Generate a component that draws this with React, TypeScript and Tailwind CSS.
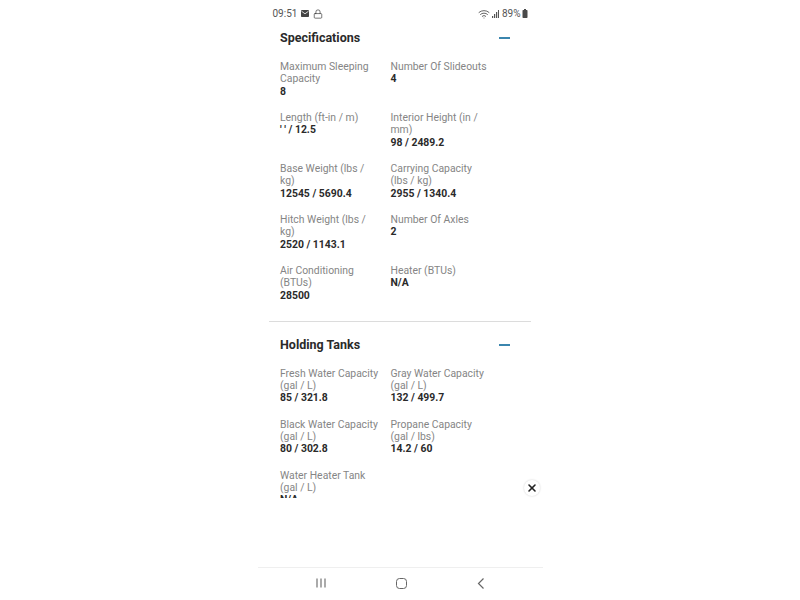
import { Lock, Wifi, X } from "lucide-react";

type Spec = { label: string; value: string };

const specifications: Spec[] = [
  { label: "Maximum Sleeping Capacity", value: "8" },
  { label: "Number Of Slideouts", value: "4" },
  { label: "Length (ft-in / m)", value: "' ' / 12.5" },
  { label: "Interior Height (in / mm)", value: "98 / 2489.2" },
  { label: "Base Weight (lbs / kg)", value: "12545 / 5690.4" },
  { label: "Carrying Capacity (lbs / kg)", value: "2955 / 1340.4" },
  { label: "Hitch Weight (lbs / kg)", value: "2520 / 1143.1" },
  { label: "Number Of Axles", value: "2" },
  { label: "Air Conditioning (BTUs)", value: "28500" },
  { label: "Heater (BTUs)", value: "N/A" },
];

const holdingTanks: Spec[] = [
  { label: "Fresh Water Capacity (gal / L)", value: "85 / 321.8" },
  { label: "Gray Water Capacity (gal / L)", value: "132 / 499.7" },
  { label: "Black Water Capacity (gal / L)", value: "80 / 302.8" },
  { label: "Propane Capacity (gal / lbs)", value: "14.2 / 60" },
  { label: "Water Heater Tank (gal / L)", value: "N/A" },
];

function SpecGrid({ items }: { items: Spec[] }) {
  return (
    <div className="grid grid-cols-[110.5px_110.5px] gap-y-[14.25px] pl-[11.5px]">
      {items.map((item) => (
        <div key={item.label} className="pr-[10px] text-[10.4px] leading-[12.25px]">
          <div className="text-[#858585]">{item.label}</div>
          <div className="font-bold text-[#2a2a2a]">{item.value}</div>
        </div>
      ))}
    </div>
  );
}

function SectionHeader({ title }: { title: string }) {
  return (
    <div className="flex h-[20px] items-center justify-between pl-[11.5px] pr-[21px]">
      <h2 className="text-[12.5px] font-bold text-[#2a2a2a]">{title}</h2>
      <div className="h-[2px] w-[11px] bg-[#3b86ae]" />
    </div>
  );
}

export default function App() {
  return (
    <div className="h-[600px] w-[800px] bg-white font-['Roboto',sans-serif]">
      <div className="relative mx-auto flex h-full w-[285px] flex-col">
        {/* Status bar */}
        <div className="flex h-[27px] shrink-0 items-center justify-between pl-[15px] pr-[15px] text-[10px] text-[#555]">
          <div className="flex items-center gap-[4px]">
            <span>09:51</span>
            <svg width="8" height="7" viewBox="0 0 8 7">
              <rect width="8" height="7" rx="0.8" fill="#444" />
              <path d="M0.5 1.2L4 3.8L7.5 1.2" fill="none" stroke="#fff" strokeWidth="0.8" />
            </svg>
            <Lock size={10} strokeWidth={1.6} color="#333" />
          </div>
          <div className="flex items-center">
            <Wifi size={12} strokeWidth={2} color="#666" />
            <svg className="ml-[2px]" width="7" height="8" viewBox="0 0 7 8" fill="#555">
              <rect x="0" y="6" width="1.2" height="2" />
              <rect x="2" y="4" width="1.2" height="4" />
              <rect x="4" y="2" width="1.2" height="6" />
              <rect x="6" y="0" width="1" height="8" />
            </svg>
            <span className="ml-[3px]">89%</span>
            <svg className="ml-[1px]" width="6" height="9" viewBox="0 0 6 9" fill="#4a4a4a">
              <rect x="2" y="0" width="2" height="1" />
              <rect x="0.5" y="1" width="5" height="8" rx="0.8" />
            </svg>
          </div>
        </div>

        {/* Scrolling content, cut off above the ad slot */}
        <div className="h-[471px] shrink-0 overflow-hidden pl-[11px] pr-[12px]">
          <div className="mt-[1px]">
            <SectionHeader title="Specifications" />
          </div>
          <div className="mt-[13px]">
            <SpecGrid items={specifications} />
          </div>
          <div className="mt-[19.5px] border-t border-[#dcdcdc]" />
          <div className="mt-[13px]">
            <SectionHeader title="Holding Tanks" />
          </div>
          <div className="mt-[12.5px]">
            <SpecGrid items={holdingTanks} />
          </div>
        </div>

        <div className="flex-1" />

        {/* Android nav bar */}
        <div className="flex h-[33px] shrink-0 items-center justify-center border-t border-[#efefef] pb-[2px]">
          <div className="flex w-[169px] items-center justify-between">
            <svg width="10" height="10" viewBox="0 0 10 10" stroke="#666" strokeWidth="1.1">
              <path d="M1 0.5V9.5M5 0.5V9.5M9 0.5V9.5" />
            </svg>
            <div className="h-[11px] w-[11px] rounded-[3.5px] border-[1.3px] border-[#666]" />
            <svg width="8" height="11" viewBox="0 0 8 11" fill="none" stroke="#666" strokeWidth="1.2">
              <path d="M6.5 0.5L1.5 5.5L6.5 10.5" />
            </svg>
          </div>
        </div>

        {/* Close button over the ad */}
        <div className="absolute left-[266px] top-[480px] flex h-[16px] w-[16px] items-center justify-center rounded-full bg-white shadow-[0_0_2px_rgba(0,0,0,0.2)]">
          <X size={12} strokeWidth={3.2} color="#222" />
        </div>
      </div>
    </div>
  );
}
